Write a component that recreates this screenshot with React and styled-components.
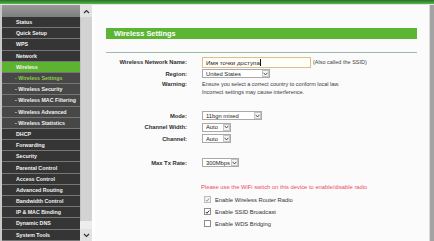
import React from 'react';
import styled, { createGlobalStyle } from 'styled-components';

const GlobalStyle = createGlobalStyle`
   html, body { margin: 0; padding: 0; background: #fbfbfb; overflow: hidden; }
   body { font-family: "Liberation Sans", Arial, sans-serif; }
`

const menu = [
   { label: 'Status' },
   { label: 'Quick Setup' },
   { label: 'WPS' },
   { label: 'Network' },
   { label: 'Wireless', active: true },
   { label: '- Wireless Settings', sub: true, current: true },
   { label: '- Wireless Security', sub: true },
   { label: '- Wireless MAC Filtering', sub: true },
   { label: '- Wireless Advanced', sub: true },
   { label: '- Wireless Statistics', sub: true },
   { label: 'DHCP' },
   { label: 'Forwarding' },
   { label: 'Security' },
   { label: 'Parental Control' },
   { label: 'Access Control' },
   { label: 'Advanced Routing' },
   { label: 'Bandwidth Control' },
   { label: 'IP & MAC Binding' },
   { label: 'Dynamic DNS' },
   { label: 'System Tools' },
];

const Arrow = ({ up }) => (
   <svg width="7" height="5" viewBox="0 0 7 5">
      <path d={up ? 'M1 4 L3.5 1.5 L6 4' : 'M1 1 L3.5 3.5 L6 1'} fill="none" stroke="#333" strokeWidth="1.2" />
   </svg>
);

const Select = ({ width, value }) => (
   <SelectBox $width={width}>
      <SelectValue>{value}</SelectValue>
      <SelectButton>
         <svg width="5" height="4" viewBox="0 0 5 4">
            <path d="M0.6 0.8 L2.5 3 L4.4 0.8" fill="none" stroke="#444" strokeWidth="0.9" />
         </svg>
      </SelectButton>
   </SelectBox>
);

const Check = ({ checked, disabled, label }) => (
   <CheckRow>
      <Box $disabled={disabled}>
         {checked && (
            <svg width="6" height="6" viewBox="0 0 6 6">
               <path d="M1 3 L2.4 4.6 L5 1.2" fill="none" stroke={disabled ? '#9a9a9a' : '#222'} strokeWidth="1.1" />
            </svg>
         )}
      </Box>
      <CheckText>{label}</CheckText>
   </CheckRow>
);

const App = () => {
   return (
      <Page>
         <GlobalStyle />
         <TopBar />
         <Main>
            <MenuFrame>
               <MenuTop />
               {menu.map((item) => (
                  <MenuItem key={item.label} $active={item.active} $sub={item.sub} $current={item.current}>
                     {item.label}
                  </MenuItem>
               ))}
            </MenuFrame>
            <ScrollBar>
               <ScrollArrow><Arrow up /></ScrollArrow>
               <Thumb />
               <ScrollArrow><Arrow /></ScrollArrow>
            </ScrollBar>
            <Divider />
            <Content>
               <Title>Wireless Settings</Title>
               <Rule />
               <Form>
                  <Label>Wireless Network Name:</Label>
                  <Field>
                     <TextInput>Имя точки доступа<Caret /></TextInput>
                     <Hint>(Also called the SSID)</Hint>
                  </Field>

                  <Label>Region:</Label>
                  <Field><Select width={68} value="United States" /></Field>

                  <Label $top>Warning:</Label>
                  <Note>
                     Ensure you select a correct country to conform local law.<br />
                     Incorrect settings may cause interference.
                  </Note>

                  <Spacer $h={11} />

                  <Label>Mode:</Label>
                  <Field><Select width={60} value="11bgn mixed" /></Field>

                  <Label>Channel Width:</Label>
                  <Field><Select width={29} value="Auto" /></Field>

                  <Label>Channel:</Label>
                  <Field><Select width={29} value="Auto" /></Field>

                  <Spacer $h={12.5} />

                  <Label>Max Tx Rate:</Label>
                  <Field><Select width={37} value="300Mbps" /></Field>

                  <Spacer $h={14} />
                  <Alert>Please use the WiFi switch on this device to enable/disable radio</Alert>

                  <Blank />
                  <Check checked disabled label="Enable Wireless Router Radio" />
                  <Blank />
                  <Check checked label="Enable SSID Broadcast" />
                  <Blank />
                  <Check label="Enable WDS Bridging" />
               </Form>
            </Content>
            <RightEdge />
         </Main>
      </Page>
   );
}

const Page = styled.div`
   width: 434px;
   height: 241px;
   display: flex;
   flex-direction: column;
   overflow: hidden;
   background: #fbfbfb;
`
const TopBar = styled.div`
   flex: 0 0 4px;
   background: linear-gradient(#2a6e2e, #3f9a3c 60%, #62b548);
   border-bottom: 1px solid #dfe6df;
`
const Main = styled.div`
   flex: 1;
   display: flex;
   min-height: 0;
`
const MenuFrame = styled.div`
   width: 78px;
   border-left: 2px solid #c9c9c9;
   background: #3c3c3c;
   display: flex;
   flex-direction: column;
   overflow: hidden;
`
const MenuTop = styled.div`
   flex: 0 0 12px;
   background: linear-gradient(#9a9a9a, #7e7e7e);
`
const MenuItem = styled.div`
   flex: 0 0 10.2px;
   display: flex;
   align-items: center;
   padding-left: ${p => (p.$sub ? '13px' : '14px')};
   border-bottom: 1px solid #767676;
   background: ${p => (p.$active ? '#5db330' : p.$sub ? '#474747' : '#353535')};
   color: ${p => (p.$current ? '#8fd04a' : '#f2f2f2')};
   font-size: 5.3px;
   font-weight: bold;
   white-space: nowrap;
`
const ScrollBar = styled.div`
   width: 12px;
   background: #ededed;
   display: flex;
   flex-direction: column;
   align-items: stretch;
`
const ScrollArrow = styled.div`
   flex: 0 0 12px;
   display: flex;
   align-items: center;
   justify-content: center;
   background: #e2e2e2;
`
const Thumb = styled.div`
   flex: 0 0 204px;
   background: #d3d3d3;
   border-left: 1px solid #c4c4c4;
   margin-bottom: auto;
`
const Divider = styled.div`
   width: 3px;
   background: #ffffff;
`
const Content = styled.div`
   flex: 1;
   background: #fbfbfb;
   padding: 23px 12px 0 11px;
   display: flex;
   flex-direction: column;
`
const Title = styled.div`
   height: 11px;
   display: flex;
   align-items: center;
   padding-left: 8px;
   background: #5cb532;
   color: #ffffff;
   font-size: 7.4px;
   font-weight: bold;
`
const Rule = styled.div`
   height: 1px;
   margin-top: 13px;
   background: #9fb9a8;
`
const Form = styled.div`
   display: grid;
   grid-template-columns: 81px 1fr;
   column-gap: 15px;
   margin-top: 3.5px;
   color: #333;
   font-size: 5.5px;
`
const Label = styled.div`
   height: ${p => (p.$top ? 'auto' : '11.5px')};
   display: flex;
   justify-content: flex-end;
   align-items: ${p => (p.$top ? 'flex-start' : 'center')};
   padding-top: ${p => (p.$top ? '1px' : '0')};
   font-size: 5.8px;
   font-weight: bold;
   color: #2e2e2e;
   white-space: nowrap;
`
const Field = styled.div`
   height: 11.5px;
   display: flex;
   align-items: center;
   gap: 2px;
`
const TextInput = styled.div`
   width: 104px;
   height: 9px;
   border: 1px solid #dcc08c;
   background: #fffef8;
   display: flex;
   align-items: center;
   padding-left: 3px;
   color: #1e1e1e;
   font-size: 6.2px;
`
const Caret = styled.span`
   width: 0.6px;
   height: 7px;
   background: #111;
`
const Hint = styled.span`
   color: #444;
   white-space: nowrap;
`
const SelectBox = styled.div`
   width: ${p => p.$width}px;
   height: 9px;
   box-sizing: border-box;
   border: 1px solid #a9a9a9;
   background: #ffffff;
   display: flex;
   align-items: center;
   justify-content: space-between;
   padding-left: 3px;
   color: #222;
   font-size: 5.8px;
   white-space: nowrap;
`
const SelectValue = styled.span`
   overflow: hidden;
`
const SelectButton = styled.span`
   flex: 0 0 7px;
   height: 7px;
   box-sizing: border-box;
   border: 1px solid #c6c6c6;
   background: #f3f3f3;
   display: flex;
   align-items: center;
   justify-content: center;
`
const Note = styled.div`
   line-height: 8.5px;
   padding: 0 0 2.25px;
   color: #3a3a3a;
   white-space: nowrap;
`
const Spacer = styled.div`
   grid-column: 1 / -1;
   height: ${p => p.$h}px;
`
const Alert = styled.div`
   grid-column: 2;
   margin-left: -1px;
   height: 9px;
   margin-bottom: 2.5px;
   display: flex;
   align-items: center;
   color: #ec4a63;
   font-size: 5.8px;
   white-space: nowrap;
`
const Blank = styled.div``
const CheckRow = styled.div`
   display: flex;
   align-items: center;
   gap: 4px;
   height: 12px;
   padding-left: 2px;
`
const Box = styled.span`
   width: 7px;
   height: 7px;
   box-sizing: border-box;
   border: 1px solid ${p => (p.$disabled ? '#bdbdbd' : '#8c8c8c')};
   background: ${p => (p.$disabled ? '#f1f1f1' : '#ffffff')};
   display: flex;
   align-items: center;
   justify-content: center;
`
const CheckText = styled.span`
   color: #333;
   font-size: 5.8px;
   white-space: nowrap;
`
const RightEdge = styled.div`
   width: 4px;
   background: #a3a3a3;
   border-left: 1px solid #dcdcdc;
`

export default App;
